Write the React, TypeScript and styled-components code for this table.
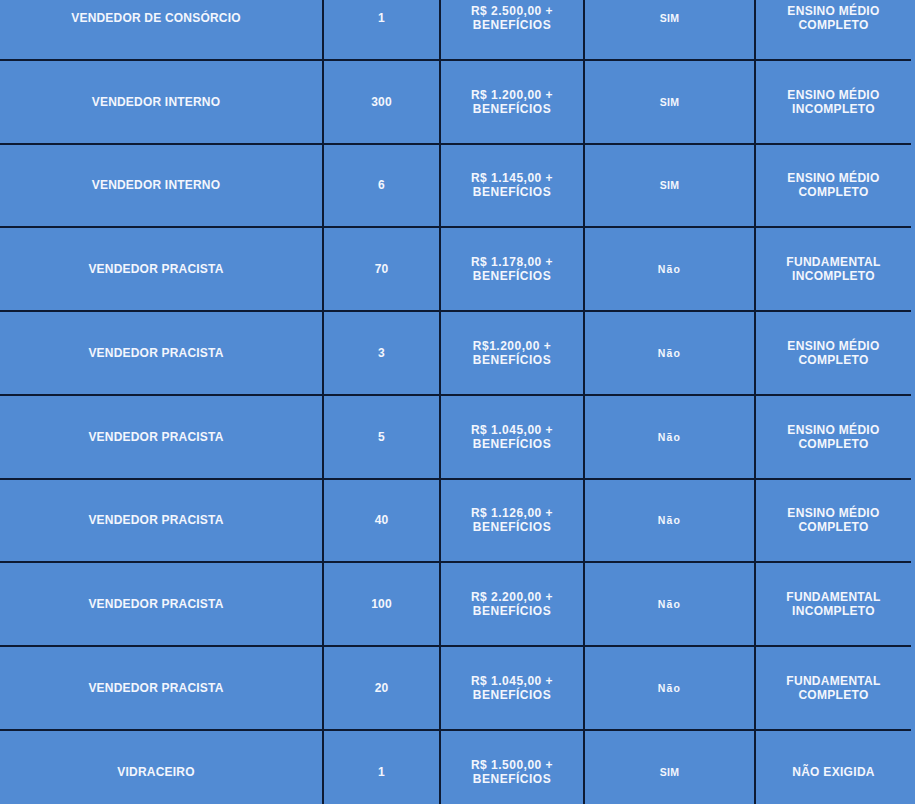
import React from "react";
import styled, { createGlobalStyle } from "styled-components";

const Global = createGlobalStyle`
  html, body { margin: 0; padding: 0; background: #528bd3; overflow: hidden; }
  body { width: 915px; height: 804px; }
`;

const Viewport = styled.div`
  width: 915px;
  height: 804px;
  overflow: hidden;
`;

const Table = styled.table`
  border-collapse: collapse;
  table-layout: fixed;
  width: 922px;
  margin-top: -25px;
  margin-left: -12px;
  background: #528bd3;
  font-family: "Liberation Sans", Arial, sans-serif;
  font-weight: bold;
  color: #f3f6fd;
`;

const Col = styled.col<{ $w: number }>`
  width: ${(p) => p.$w}px;
`;

const Row = styled.tr`
  height: 83.75px;
`;

const Cell = styled.td<{ $size?: number; $spacing?: number }>`
  border: 2px solid #0d1a33;
  text-align: center;
  vertical-align: middle;
  padding: 0 4px;
  font-size: ${(p) => p.$size ?? 12}px;
  letter-spacing: ${(p) => p.$spacing ?? 0.2}px;
  line-height: 14px;

  &:last-child {
    border-right: none;
  }
`;

type Job = {
  title: string;
  qty: string;
  salary: string;
  pcd: string;
  edu: [string, string?];
};

const jobs: Job[] = [
  { title: "VENDEDOR DE CONSÓRCIO", qty: "1", salary: "R$ 2.500,00 +", pcd: "SIM", edu: ["ENSINO MÉDIO", "COMPLETO"] },
  { title: "VENDEDOR INTERNO", qty: "300", salary: "R$ 1.200,00 +", pcd: "SIM", edu: ["ENSINO MÉDIO", "INCOMPLETO"] },
  { title: "VENDEDOR INTERNO", qty: "6", salary: "R$ 1.145,00 +", pcd: "SIM", edu: ["ENSINO MÉDIO", "COMPLETO"] },
  { title: "VENDEDOR PRACISTA", qty: "70", salary: "R$ 1.178,00 +", pcd: "Não", edu: ["FUNDAMENTAL", "INCOMPLETO"] },
  { title: "VENDEDOR PRACISTA", qty: "3", salary: "R$1.200,00 +", pcd: "Não", edu: ["ENSINO MÉDIO", "COMPLETO"] },
  { title: "VENDEDOR PRACISTA", qty: "5", salary: "R$ 1.045,00 +", pcd: "Não", edu: ["ENSINO MÉDIO", "COMPLETO"] },
  { title: "VENDEDOR PRACISTA", qty: "40", salary: "R$ 1.126,00 +", pcd: "Não", edu: ["ENSINO MÉDIO", "COMPLETO"] },
  { title: "VENDEDOR PRACISTA", qty: "100", salary: "R$ 2.200,00 +", pcd: "Não", edu: ["FUNDAMENTAL", "INCOMPLETO"] },
  { title: "VENDEDOR PRACISTA", qty: "20", salary: "R$ 1.045,00 +", pcd: "Não", edu: ["FUNDAMENTAL", "COMPLETO"] },
  { title: "VIDRACEIRO", qty: "1", salary: "R$ 1.500,00 +", pcd: "SIM", edu: ["NÃO EXIGIDA"] },
];

export default function App() {
  return (
    <>
      <Global />
      <Viewport>
        <Table>
          <colgroup>
            <Col $w={334} />
            <Col $w={117} />
            <Col $w={144} />
            <Col $w={171} />
            <Col $w={156} />
          </colgroup>
          <tbody>
            {jobs.map((j, i) => (
              <Row key={i}>
                <Cell>{j.title}</Cell>
                <Cell>{j.qty}</Cell>
                <Cell $spacing={0.5}>
                  {j.salary}
                  <br />
                  BENEFÍCIOS
                </Cell>
                <Cell $size={10.5} $spacing={j.pcd === "Não" ? 1.2 : 0.3}>
                  {j.pcd}
                </Cell>
                <Cell $spacing={0.3}>
                  {j.edu[0]}
                  {j.edu[1] && (
                    <>
                      <br />
                      {j.edu[1]}
                    </>
                  )}
                </Cell>
              </Row>
            ))}
          </tbody>
        </Table>
      </Viewport>
    </>
  );
}
